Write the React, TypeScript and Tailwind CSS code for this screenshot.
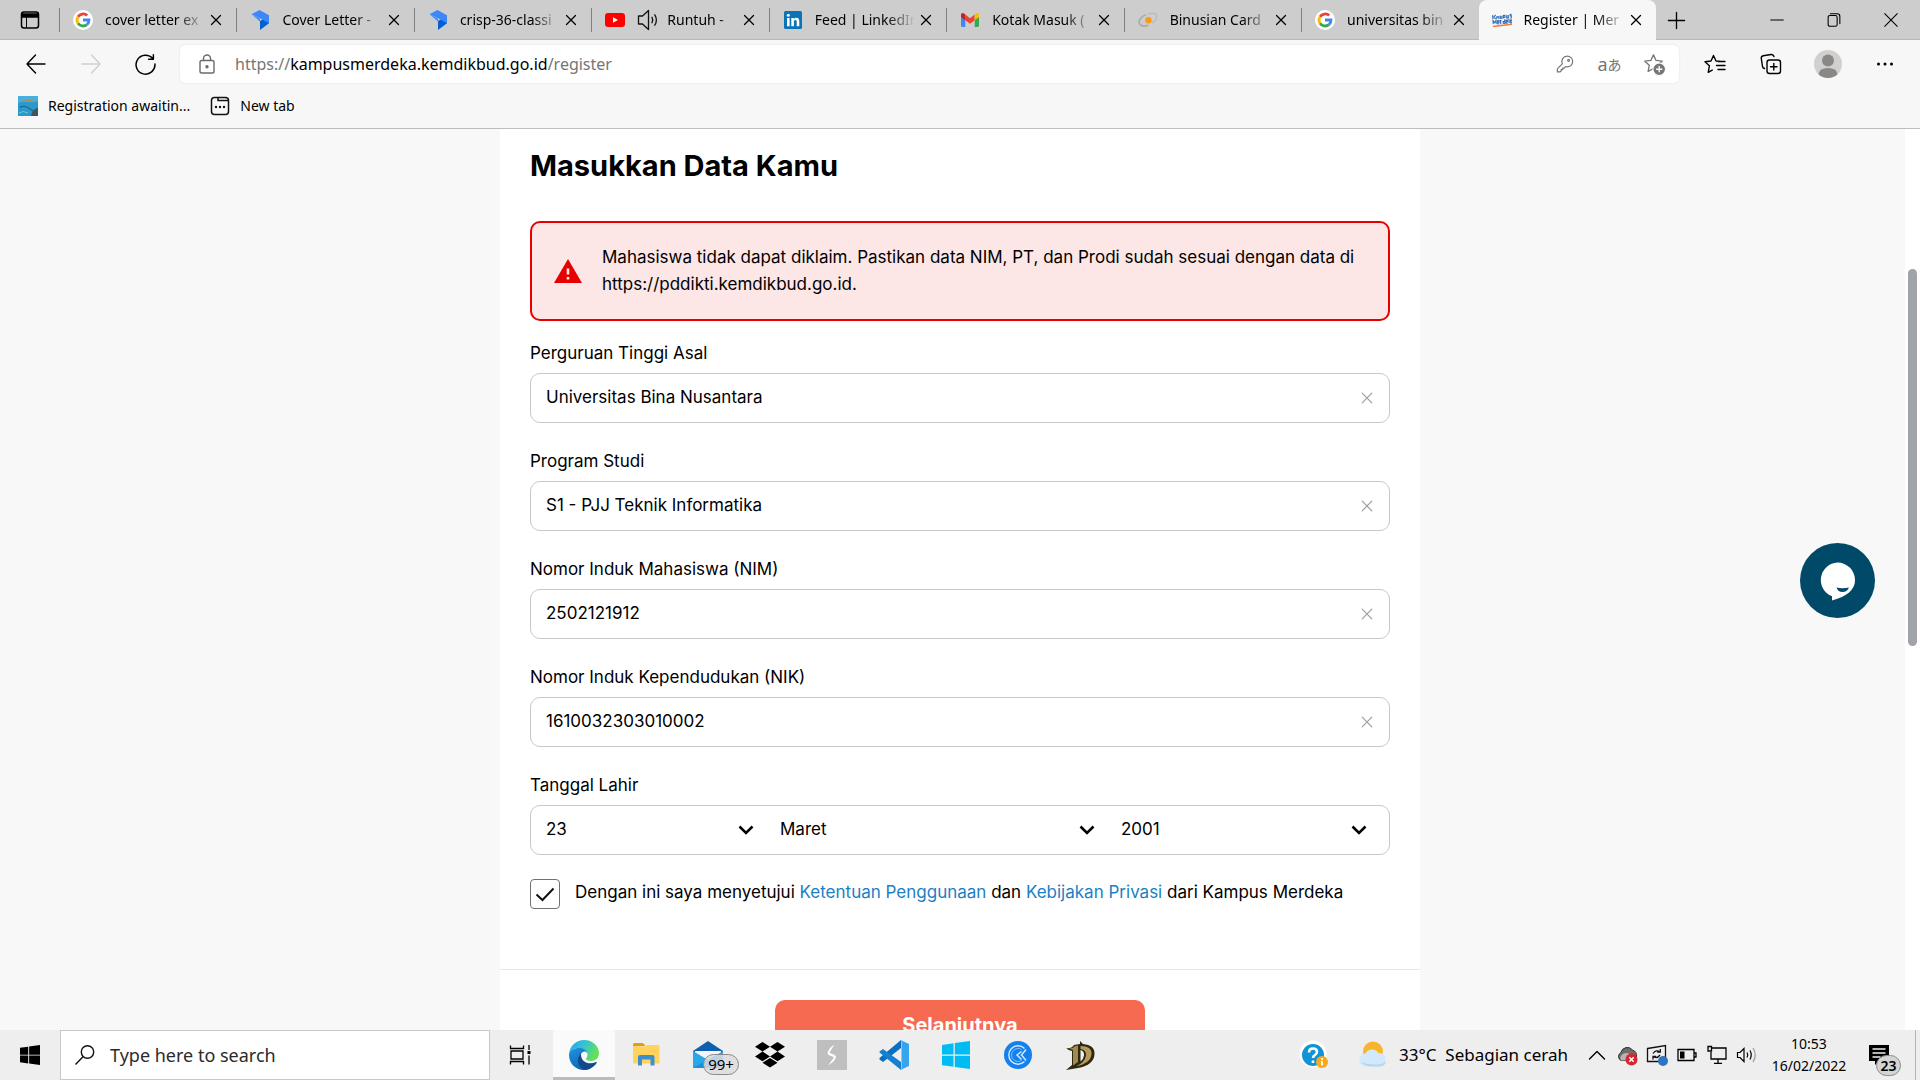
import type { ReactNode } from "react";

/* ---------- browser icons ---------- */

const GoogleIcon = () => (
  <svg viewBox="0 0 20 20" className="size-5 shrink-0">
    <circle cx="10" cy="10" r="10" fill="#fff" />
    <g fill="none" strokeWidth="2.8">
      <path d="M5 6.8A6 6 0 0 1 14.2 5.6" stroke="#ea4335" />
      <path d="M5 6.8a6 6 0 0 0 0 6.5" stroke="#fbbc05" />
      <path d="M5 13.2a6 6 0 0 0 8.9 1.4" stroke="#34a853" />
      <path d="M10 10h6a6 6 0 0 1-2 4.6" stroke="#4285f4" />
    </g>
  </svg>
);

const LetterIcon = () => (
  <svg viewBox="0 0 20 20" className="size-5 shrink-0">
    <path d="M10 11l9-5.500v7.800L10 20z" fill="#0061d0" />
    <path d="M1.500 4.200L9.500 0 19 5.300v8L10.500 8.500z" fill="#3b87fb" />
    <path d="M1.500 4.200l8.500 4.600v2.700z" fill="#3b87fb" />
  </svg>
);

const YoutubeIcon = () => (
  <svg viewBox="0 0 20 20" className="size-5 shrink-0">
    <rect y="3" width="20" height="14" rx="3" fill="#f00" />
    <path d="M8 7.200l5 2.800-5 2.800z" fill="#fff" />
  </svg>
);

const TabSpeakerIcon = () => (
  <svg viewBox="0 0 22 22" className="-mr-1 size-[22px] shrink-0" fill="none" stroke="#111" strokeWidth="1.300" strokeLinejoin="round" strokeLinecap="round">
    <path d="M1.500 7h4l6-5.500v19L5.500 15h-4zM15 8.300q1.600 2.700 0 5.400M17.800 5.800q3.200 5.200 0 10.400" />
  </svg>
);

const LinkedinIcon = () => (
  <svg viewBox="0 0 20 20" className="size-5 shrink-0">
    <rect x="1" y="1" width="18" height="18" rx="1.500" fill="#0a74b6" />
    <g fill="#fff">
      <circle cx="5.300" cy="5.300" r="1.500" />
      <path d="M4 8h2.600v8.200H4zM8.300 8h2.500v1.200c.5-.8 1.300-1.400 2.500-1.400 2.400 0 3 1.600 3 3.700v4.700h-2.600V12c0-1.100-.2-2-1.300-2-1.200 0-1.500.9-1.500 2v4.200H8.300z" />
    </g>
  </svg>
);

const GmailIcon = () => (
  <svg viewBox="0 0 20 20" className="size-5 shrink-0">
    <path d="M1 5v10.500q0 1.500 1.500 1.500H5.300V8z" fill="#4285f4" />
    <path d="M19 5v10.500q0 1.500-1.500 1.500h-2.800V8z" fill="#34a853" />
    <path d="M5.300 4.500L10 8.200l4.700-3.700v5.700L10 13.700l-4.700-3.500z" fill="#ea4335" />
    <path d="M1 5q0-2 1.800-2Q4 3 5.300 4.500v5.700L1 7z" fill="#c5221f" />
    <path d="M19 5q0-2-1.800-2-1.200 0-2.500 1.500v5.700L19 7z" fill="#fbbc04" />
  </svg>
);

const BinusIcon = () => (
  <svg viewBox="0 0 20 20" className="size-5 shrink-0" fill="none">
    <path d="M8 4.800C3 6.500 0 10.500 1.500 13.700c1.200 2.400 5 2.900 9 1.600" stroke="#aaa" strokeWidth="1.600" />
    <path d="M9 4.500c4-1.500 8.500-1.600 9.500 0 1 2-.6 6.200-4.600 8.800" stroke="#b9b9b9" strokeWidth="1.200" />
    <path d="M5 10c1-3 4-5 8-5.500" stroke="#ccc" strokeWidth="1.200" />
    <circle cx="10.500" cy="10.300" r="3.200" fill="#f99a1c" />
  </svg>
);

const KampusIcon = () => (
  <svg viewBox="0 0 20 20" className="size-5 shrink-0">
    <g transform="rotate(-4 10 10)" fill="none" stroke="#2f6cb8" strokeWidth="1.100">
      <path d="M1 4.500v4M2 6.500l2-2M2 6.500l2 2M5 8.500v-2h2v2M8.500 9V5.500M10 9V6M11.500 8.500v-3h1.700v2h-1.500M15 5.500v3h1.500v-3M18 8.500h2v-2h-1.500v-1.500h1.500" />
      <path d="M1 13.500v-3.500l1.500 2L4 10v3.500M5.500 12h1.500v-1.500H5.500v3h1.500M8.500 14v-3.500h1M11 13.500h1.700V9.500M11 13.500v-2h1.500M14 12h1.500v-1.500H14v3h1.500M17 9.500v4M18.500 13.500h1.500v-3h-1.500z" />
    </g>
    <path d="M1 16.500q9-1 19-2.200" stroke="#ee7d3b" strokeWidth="1.500" fill="none" />
  </svg>
);

const Line = ({ d, className, w = 1.4 }: { d: string; className: string; w?: number }) => (
  <svg viewBox="0 0 20 20" className={className} fill="none" stroke="currentColor" strokeWidth={w} strokeLinecap="round" strokeLinejoin="round">
    <path d={d} />
  </svg>
);

const STAR = "M10 1.800l2.500 5.300 5.800.7-4.300 4 1.100 5.800L10 14.800l-5.100 2.800L6 11.800 1.700 7.800l5.800-.7z";

/* ---------- tab strip ---------- */

type Tab = { title: string; icon: ReactNode; audio?: boolean; active?: boolean };

const tabs: Tab[] = [
  { title: "cover letter ex", icon: <GoogleIcon /> },
  { title: "Cover Letter -", icon: <LetterIcon /> },
  { title: "crisp-36-classi", icon: <LetterIcon /> },
  { title: "Runtuh -", icon: <YoutubeIcon />, audio: true },
  { title: "Feed | LinkedIn", icon: <LinkedinIcon /> },
  { title: "Kotak Masuk (", icon: <GmailIcon /> },
  { title: "Binusian Card", icon: <BinusIcon /> },
  { title: "universitas bin", icon: <GoogleIcon /> },
  { title: "Register | Mer", icon: <KampusIcon />, active: true },
];

function TabItem({ tab }: { tab: Tab }) {
  return (
    <div
      className={
        tab.active
          ? "flex h-10 min-w-0 flex-1 items-center rounded-t-lg bg-[#f7f7f7]"
          : "flex h-10 min-w-0 flex-1 items-center"
      }
    >
      <span className={tab.active ? "h-6" : "h-6 w-px bg-[#808080]"} />
      <button type="button" className="ml-[13px] flex h-full min-w-0 flex-1 items-center gap-3 text-left">
        {tab.icon}
        {tab.audio && <TabSpeakerIcon />}
        <span className="flex-1 overflow-hidden whitespace-nowrap text-sm text-black [mask-image:linear-gradient(to_right,black_72%,transparent_100%)]">
          {tab.title}
        </span>
      </button>
      <button type="button" aria-label={`Close ${tab.title}`} className="mr-[9px] flex w-[22px] items-center justify-center text-black">
        <Line d="M5 5l10 10M15 5L5 15" className="size-[18px]" />
      </button>
    </div>
  );
}

function TabStrip() {
  return (
    <div className="flex h-10 items-center bg-[#cdcdcd] shadow-[inset_0_-1px_0_#b8b8b8]">
      <button type="button" aria-label="Tab actions" className="flex h-10 w-[59px] shrink-0 items-center justify-center text-black">
        <svg viewBox="0 0 20 20" className="size-5" fill="none" stroke="currentColor" strokeWidth="1.500">
          <rect x="1.500" y="2" width="17" height="16" rx="2.500" />
          <path d="M2 4h16v3H2z" fill="currentColor" />
          <path d="M6.500 7v11" strokeWidth="1" />
        </svg>
      </button>
      <div className="flex max-w-[1597px] flex-1">
        {tabs.map((t) => (
          <TabItem key={t.title} tab={t} />
        ))}
      </div>
      <button type="button" aria-label="New tab" className="flex h-10 w-10 items-center justify-center text-black">
        <Line d="M10 1.500v17M1.500 10h17" className="size-[19px]" />
      </button>
      <div className="ml-auto flex h-10">
        <button type="button" aria-label="Minimize" className="flex w-[57px] items-center justify-center">
          <Line d="M3 10h14" className="size-[18px]" w={1.2} />
        </button>
        <button type="button" aria-label="Restore" className="flex w-[57px] items-center justify-center">
          <Line d="M3.500 7q0-2 2-2h6q2 0 2 2v8q0 2-2 2h-6q-2 0-2-2zM6 3h7.500q3 0 3 3v8" className="size-[18px]" w={1.2} />
        </button>
        <button type="button" aria-label="Close window" className="flex w-[58px] items-center justify-center">
          <Line d="M3 3l14 14M17 3L3 17" className="size-[18px]" w={1.2} />
        </button>
      </div>
    </div>
  );
}

/* ---------- toolbar ---------- */

function Toolbar() {
  return (
    <div className="flex h-12 items-center pr-2">
      <nav className="flex w-[180px] shrink-0 items-center pl-2 text-black">
        <button type="button" aria-label="Back" className="flex w-[55px] justify-center">
          <Line d="M19 10H1M9.500 1L1 10l8.500 9" className="size-5" />
        </button>
        <button type="button" aria-label="Forward" className="flex w-[55px] justify-center text-[#cfcfcf]">
          <Line d="M1 10h18M10.500 1L19 10l-8.500 9" className="size-5" />
        </button>
        <button type="button" aria-label="Refresh" className="flex w-[55px] justify-center">
          <Line d="M17 4.500A9 9 0 1 0 19 9.500M17.500 .800v4.200h-4.500" className="size-[21px]" />
        </button>
      </nav>
      <div className="flex h-[38px] min-w-0 flex-1 items-center rounded-md bg-white pl-[17px] pr-0.5 shadow-[0_0_3px_rgba(0,0,0,0.08)]">
        <button type="button" aria-label="View site information" className="mr-[18px] text-[#6b6b6b]">
          <svg viewBox="0 0 20 20" className="size-5" fill="none" stroke="currentColor" strokeWidth="1.400">
            <rect x="3" y="6.500" width="14" height="12.500" rx="1.800" />
            <path d="M6.500 6.500V4.500a3.500 3.500 0 0 1 7 0v2" />
            <circle cx="10" cy="12.800" r="1" fill="currentColor" />
          </svg>
        </button>
        <div className="min-w-0 flex-1 whitespace-nowrap text-base text-[#767676]">
          https://<span className="text-black">kampusmerdeka.kemdikbud.go.id</span>/register
        </div>
        <div className="flex items-center text-[#767676]">
          <button type="button" aria-label="Saved passwords" className="flex w-[45px] justify-center">
            <svg viewBox="0 0 20 20" className="size-[18px]" fill="none" stroke="currentColor" strokeWidth="1.300" strokeLinejoin="round">
              <path d="M12.500 1.200a6 6 0 0 1 0 12q-1.200 0-2-.4l-1.300 1.700H7.500v1.700H5.700v1.600l-1 1H1.500v-3.300L7 9.800A6 6 0 0 1 12.500 1.200z" />
              <circle cx="14" cy="6" r="1" />
            </svg>
          </button>
          <button type="button" aria-label="Translate" className="flex w-[45px] items-center justify-center">
            <span className="text-lg leading-5">a</span>
            <span className="font-['Noto_Sans_CJK_JP',sans-serif] text-sm leading-5">あ</span>
          </button>
          <button type="button" aria-label="Add to favorites" className="flex w-[45px] justify-center">
            <svg viewBox="0 0 22 22" className="size-[23px]" fill="none" stroke="currentColor" strokeWidth="1.300" strokeLinejoin="round">
              <path d={STAR} />
              <circle cx="15.500" cy="15.500" r="6" fill="currentColor" stroke="#fff" strokeWidth="1" />
              <path d="M15.500 12.500v6M12.500 15.500h6" stroke="#fff" />
            </svg>
          </button>
        </div>
      </div>
      <div className="flex items-center pl-2 text-black">
        <button type="button" aria-label="Favorites" className="flex w-14 justify-center">
          <svg viewBox="0 0 22 20" className="h-5 w-[22px]" fill="none" stroke="currentColor" strokeWidth="1.400" strokeLinejoin="round" strokeLinecap="round">
            <path d="M15.500 7.300L12 7l-2.500-5.500L7 7l-6 .8 4.400 4-1.200 6.500 4-2.200M14 7.500h7M12.500 11.500H21M14 15.500h7" />
          </svg>
        </button>
        <button type="button" aria-label="Collections" className="flex w-14 justify-center">
          <svg viewBox="0 0 22 22" className="size-[22px]" fill="none" stroke="currentColor" strokeWidth="1.400" strokeLinecap="round">
            <rect x="7" y="7" width="13.500" height="13.500" rx="2.500" />
            <path d="M13.800 10.500v6.500M10.500 13.800h6.500M4.500 15.500q-1.700-.4-2-2L1.300 5.500Q1 3.300 3.200 2.800L11 1.500q2.300-.3 3 2" />
          </svg>
        </button>
        <button type="button" aria-label="Profile" className="flex w-[58px] justify-center">
          <svg viewBox="0 0 28 28" className="size-7">
            <circle cx="14" cy="14" r="14" fill="#d2d0ce" />
            <circle cx="14" cy="10.500" r="6" fill="#8a8886" />
            <path d="M4.500 24.200Q5.500 18 14 18t9.500 6.200A14 14 0 0 1 4.500 24.200z" fill="#8a8886" />
          </svg>
        </button>
        <button type="button" aria-label="Settings and more" className="flex w-[55px] justify-center">
          <svg viewBox="0 0 20 20" className="size-5" fill="currentColor">
            <circle cx="3.500" cy="10" r="1.500" />
            <circle cx="10" cy="10" r="1.500" />
            <circle cx="16.500" cy="10" r="1.500" />
          </svg>
        </button>
      </div>
    </div>
  );
}

function Bookmarks() {
  return (
    <div className="flex h-10 items-center gap-5 pb-1 pl-[18px] text-sm text-black">
      <a href="#registration" className="flex items-center gap-[10px]">
        <svg viewBox="0 0 20 20" className="size-5">
          <rect width="20" height="20" fill="#2b9acb" />
          <path d="M0 0h20v5q-5 2-10 1T0 7z" fill="#48b0dc" />
          <path d="M5 5.500q5-1.500 10-.5" stroke="#a98a6a" strokeWidth="1.500" fill="none" />
          <path d="M2 11q6-2 10 2t8-1" stroke="#146c98" strokeWidth="1.400" fill="none" />
          <path d="M13 20q1-7 7-8v8z" fill="#43545c" />
          <path d="M1 17q4-3 9 0" stroke="#6cc4e4" fill="none" />
        </svg>
        Registration awaitin...
      </a>
      <a href="#newtab" className="flex items-center gap-[10px]">
        <svg viewBox="0 0 20 20" className="size-5" fill="none" stroke="#111" strokeWidth="1.500">
          <rect x="1.500" y="1.500" width="17" height="17" rx="3" />
          <path d="M8 1.500v3h10.500" />
          <g fill="#111" stroke="none">
            <circle cx="6" cy="11" r="1.200" />
            <circle cx="10" cy="11" r="1.200" />
            <circle cx="14" cy="11" r="1.200" />
          </g>
        </svg>
        New tab
      </a>
    </div>
  );
}

/* ---------- registration form ---------- */

const fields = [
  { id: "pt", label: "Perguruan Tinggi Asal", value: "Universitas Bina Nusantara" },
  { id: "prodi", label: "Program Studi", value: "S1 - PJJ Teknik Informatika" },
  { id: "nim", label: "Nomor Induk Mahasiswa (NIM)", value: "2502121912" },
  { id: "nik", label: "Nomor Induk Kependudukan (NIK)", value: "1610032303010002" },
];

function Field({ id, label, value }: { id: string; label: string; value: string }) {
  return (
    <div className="flex flex-col gap-[6px]">
      <label htmlFor={id} className="leading-[27px]">{label}</label>
      <div className="flex h-[50px] items-center rounded-[10px] border border-[#c6c8cc] pl-[15px] pr-4">
        <input id={id} type="text" defaultValue={value} className="min-w-0 flex-1 bg-transparent outline-none" />
        <button type="button" aria-label={`Hapus ${label}`} className="text-[#9a9da1]">
          <Line d="M2 2l16 16M18 2L2 18" className="size-3" w={2} />
        </button>
      </div>
    </div>
  );
}

function DateSelect({ label, value, last }: { label: string; value: string; last?: boolean }) {
  return (
    <div className="relative flex h-full items-center">
      <select aria-label={label} defaultValue={value} className="size-full appearance-none bg-transparent pl-[15px] outline-none">
        <option>{value}</option>
      </select>
      <svg
        viewBox="0 0 16 16"
        className={last ? "pointer-events-none absolute right-[22px] size-4" : "pointer-events-none absolute right-[11px] size-4"}
        fill="none"
        stroke="#000"
        strokeWidth="2.500"
      >
        <path d="M1.500 4.500L8 11l6.500-6.500" />
      </svg>
    </div>
  );
}

function RegisterForm() {
  return (
    <form className="mx-auto w-full max-w-[920px] bg-white pb-10 font-['Inter',sans-serif] text-[17px] text-black">
      <div className="px-[30px] pt-5">
        <h1 className="text-[29px] font-bold leading-[34px]">Masukkan Data Kamu</h1>
        <div role="alert" className="mt-[38px] flex items-center rounded-[10px] border-2 border-[#e60000] bg-[#fce6e6] py-[21px] pl-[22px] pr-4">
          <svg viewBox="0 0 28 24" className="mr-5 h-6 w-7 shrink-0">
            <path d="M14 0l14 24H0z" fill="#e60000" />
            <path d="M12.700 9.500h2.600v6h-2.600zM12.700 18h2.600v2.600h-2.600z" fill="#fce6e6" />
          </svg>
          <p className="leading-[27px]">
            Mahasiswa tidak dapat diklaim. Pastikan data NIM, PT, dan Prodi sudah sesuai dengan data di
            https://pddikti.kemdikbud.go.id.
          </p>
        </div>
        <div className="mt-[19px] flex flex-col gap-[25px]">
          {fields.map((f) => (
            <Field key={f.id} {...f} />
          ))}
          <fieldset>
            <legend className="leading-[27px]">Tanggal Lahir</legend>
            <div className="mt-[6px] grid h-[50px] grid-cols-[234fr_341fr_283fr] rounded-[10px] border border-[#c6c8cc]">
              <DateSelect label="Tanggal" value="23" />
              <DateSelect label="Bulan" value="Maret" />
              <DateSelect label="Tahun" value="2001" last />
            </div>
          </fieldset>
        </div>
        <div className="mt-6 flex gap-[15px]">
          <div className="relative size-[30px] shrink-0">
            <input id="agree" type="checkbox" defaultChecked className="size-full appearance-none rounded border border-[#6f7378] bg-white" />
            <svg viewBox="0 0 30 30" className="pointer-events-none absolute inset-0" fill="none" stroke="#111" strokeWidth="2">
              <path d="M6.500 15.500l6 5.500L23.500 9.500" />
            </svg>
          </div>
          <p className="leading-[27px]">
            <label htmlFor="agree">Dengan ini saya menyetujui</label>{" "}
            <a href="#ketentuan" className="text-[#1b7fc4]">Ketentuan Penggunaan</a> dan{" "}
            <a href="#privasi" className="text-[#1b7fc4]">Kebijakan Privasi</a> dari Kampus Merdeka
          </p>
        </div>
      </div>
      <div className="mt-[60px] flex justify-center border-t border-[#e6e7e9] pt-[30px]">
        <button type="button" className="h-[50px] w-full max-w-[370px] rounded-[10px] bg-[#f66a51] text-xl font-bold text-white">
          Selanjutnya
        </button>
      </div>
    </form>
  );
}

/* ---------- taskbar ---------- */

const EdgeIcon = () => (
  <svg viewBox="0 0 30 30" className="size-[30px]">
    <defs>
      <linearGradient id="edgeTop" x1="0" y1="0" x2="1" y2="0.400">
        <stop offset="0" stopColor="#22a4e8" />
        <stop offset="0.500" stopColor="#33c3d6" />
        <stop offset="1" stopColor="#66e05a" />
      </linearGradient>
      <linearGradient id="edgeLeft" x1="0" y1="0" x2="0.600" y2="1">
        <stop offset="0" stopColor="#1e95e0" />
        <stop offset="1" stopColor="#0f62b4" />
      </linearGradient>
    </defs>
    <path d="M0 14C1 5 8 0 15 0c9 0 15 6.500 15 13 0 5-3.500 8-8 8-3.500 0-5-1.300-5-2.300 0-.8 1.500-1.500 1.500-4C18.500 11 15 8 10.500 8 5 8 1 11 0 14z" fill="url(#edgeTop)" />
    <path d="M0 14c1-3.500 5-6 10.500-6 4 0 7 2 7.800 5C17 11.500 15 11 14 12c-4 2.500-4 9 .5 13 3 2.700 6 3 8 2.500C20 29.500 17.500 30 15 30 6 30 0 23 0 15z" fill="url(#edgeLeft)" />
    <path d="M12 13.500C7 18 8 26 15 30c5 0 10-2.500 12.700-7.200.3-.6-.2-1-.8-.7C21 25 11.500 23 12 13.500z" fill="#114a8b" />
  </svg>
);

const ExplorerIcon = () => (
  <svg viewBox="0 0 28 26" className="h-[26px] w-7">
    <path d="M1 4.500V2.500Q1 1 2.500 1H11l2.500 3z" fill="#e0a00a" />
    <path d="M1 4.500h12L15 3h11q1.500 0 1.500 1.500v17H1z" fill="#ffd35c" />
    <path d="M6 23.500V15q0-2 2-2h12.500q2 0 2 2v8.500h-4v-6h-8.500v6z" fill="#3e8fcf" />
  </svg>
);

const MailIcon = () => (
  <span className="relative flex">
    <svg viewBox="0 0 30 30" className="size-[30px]">
      <path d="M0 11L15 1l15 10v4H0z" fill="#0f5fae" />
      <path d="M2 11h26v9H2z" fill="#f3f5f8" />
      <path d="M0 11l15 9 15-9v17H0z" fill="#28a8e8" />
      <path d="M0 28L22 15.800 30 28z" fill="#1b8fdc" />
    </svg>
    <span className="absolute -right-4 top-3.5 flex h-[21px] w-9 items-center justify-center rounded-full border border-[#8a8a8a] bg-[#dcdcdc]/85 text-[15px] text-black">
      99+
    </span>
  </span>
);

const DropboxIcon = () => (
  <svg viewBox="0 0 30 26" className="h-[26px] w-[30px]">
    <path d="M7.500 0L15 4.800 7.500 9.600 0 4.800zM22.500 0L30 4.800l-7.500 4.800L15 4.800zM0 14.400l7.500-4.800L15 14.400l-7.500 4.800zM22.500 9.600l7.500 4.800-7.500 4.800-7.500-4.800zM7.500 20.800L15 16l7.500 4.800L15 25.600z" />
  </svg>
);

const SparkIcon = () => (
  <svg viewBox="0 0 30 30" className="size-[30px]">
    <path d="M0 0h30v30H0z" fill="#bfbfbf" />
    <path d="M17.500 4.500q-6 4-7 8.500 0 2 5 3.500l1.500 1-6 8q7-4 8-8.500 0-2-5-3.500l-1.500-1z" fill="#fff" />
  </svg>
);

const CodeIcon = () => (
  <svg viewBox="0 0 30 30" className="size-[30px]">
    <path d="M22 0v8L4 22 .500 19.500v-1.500z" fill="#0a6fc0" />
    <path d="M.500 11.500L4 9l18 13v8L.500 12.500z" fill="#1381cf" />
    <path d="M21.500 0L30 4v22l-8.500 4q1-1 1-2.500v-25Q22.500 1 21.500 0z" fill="#36a5ee" />
  </svg>
);

const WindowsIcon = ({ className }: { className: string }) => (
  <svg viewBox="0 0 28 28" className={className} fill="currentColor">
    <path d="M0 4l11.500-1.700v11.200H0zM12.800 2L28 0v13.500H12.800zM0 14.700h11.500v11.100L0 24.200zM12.800 14.700H28V28l-15.200-2.100z" />
  </svg>
);

const ClockAppIcon = () => (
  <svg viewBox="0 0 28 28" className="size-7" fill="none">
    <circle cx="14" cy="14" r="14" fill="#1380ee" />
    <path d="M20.500 7.500A9.200 9.200 0 1 0 20.500 20.500" stroke="#d8ebff" strokeWidth="1.400" />
    <path d="M17.500 10.500L13 14l4.500 4.500M22 8.500L17.500 14l4.500 5.500" stroke="#d8ebff" strokeWidth="1.400" />
    <path d="M17.500 8.500A6.500 6.500 0 1 0 17.500 19.500" stroke="#7fbcf8" strokeWidth="1" />
  </svg>
);

const EmblemIcon = () => (
  <svg viewBox="0 0 30 30" className="size-[30px]">
    <path d="M1 8q5 1 8-3l6-1V1l3 3q12 1 11.500 10Q29 25 13 28l-12 2 6-5V11q-3 0-6-3z" fill="#2f2712" />
    <path d="M3.500 8.500q4 .5 6.500-2.500l3-.5V22L8 25.500V10z" fill="#a08a4c" />
    <path d="M15.500 6Q27 6 26.500 14 26 23 11 26.500q9-4.500 10-11Q21.500 10 15.500 9z" fill="#b39c5b" />
    <path d="M15.500 10q4 1 3.500 5.500-.5 4-3.500 6z" fill="#eee" />
  </svg>
);

const apps: { name: string; icon: ReactNode; active?: boolean }[] = [
  { name: "Microsoft Edge", icon: <EdgeIcon />, active: true },
  { name: "File Explorer", icon: <ExplorerIcon /> },
  { name: "Mail", icon: <MailIcon /> },
  { name: "Dropbox", icon: <DropboxIcon /> },
  { name: "Spark", icon: <SparkIcon /> },
  { name: "Visual Studio Code", icon: <CodeIcon /> },
  { name: "Windows", icon: <WindowsIcon className="size-7 text-[#00bcf2]" /> },
  { name: "Clock", icon: <ClockAppIcon /> },
  { name: "Emblem", icon: <EmblemIcon /> },
];

function TrayIcons() {
  const box = "flex w-[30px] shrink-0 items-center justify-center";
  return (
    <div className="flex h-full items-center text-black">
      <button type="button" aria-label="Show hidden icons" className={box}>
        <Line d="M2.500 14L10 6.500l7.500 7.500" className="size-5" />
      </button>
      <button type="button" aria-label="OneDrive" className={box}>
        <svg viewBox="0 0 22 22" className="size-[22px]">
          <path d="M5 16.500a4.500 4.500 0 0 1 0-8A6.500 6.500 0 0 1 16.500 6Q21 7.500 20.500 13q-1 3.500-4 3.500z" fill="#6d6d6d" stroke="#2a2a2a" />
          <path d="M5 16.500q-2-4 2-6.500t8 1l4 5.500z" fill="#b5b5b5" />
          <circle cx="15.500" cy="15.500" r="6" fill="#dc2430" />
          <path d="M13.300 13.300l4.400 4.400M17.700 13.300l-4.400 4.400" stroke="#fff" strokeWidth="1.500" />
        </svg>
      </button>
      <button type="button" aria-label="Windows Update" className={box}>
        <svg viewBox="0 0 22 22" className="size-[22px]" fill="none" stroke="#111" strokeWidth="1.300">
          <path d="M1.500 4.500L19.500 1.500v16l-18 0z" />
          <path d="M7 9.500q3-4.500 7-1.500M14.300 5v3.200h-3.200M14 11q-3 4-6.700 1.500M7 15.500v-3.200h3" />
          <circle cx="17" cy="17" r="5" fill="#2f74c0" stroke="none" />
        </svg>
      </button>
      <button type="button" aria-label="Battery" className={box}>
        <svg viewBox="0 0 20 20" className="size-5" fill="none" stroke="#000" strokeWidth="1.300">
          <path d="M1 4.500h16v11H1zM17 8h2v4h-2" />
          <path d="M3 6.500h4.500v7H3z" fill="#000" stroke="none" />
        </svg>
      </button>
      <button type="button" aria-label="Network" className={box}>
        <svg viewBox="0 0 20 20" className="size-5" fill="none" stroke="#000" strokeWidth="1.300">
          <path d="M5 3h14v11H4V7M11 14v4M7 18.300h8M1 1.500h3.500v4.500H1z" />
        </svg>
      </button>
      <button type="button" aria-label="Volume" className={box}>
        <svg viewBox="0 0 22 20" className="h-5 w-[22px]" fill="none" stroke="#000" strokeWidth="1.200">
          <path d="M1.500 7.500H4L8 3.500v13L4 12.500H1.500zM11 7.500q1.500 2.500 0 5M14 5.500q2.500 4.500 0 9" />
          <path d="M17 3q4.500 7 0 14" stroke="#999" />
        </svg>
      </button>
    </div>
  );
}

function Taskbar() {
  return (
    <footer className="flex h-[50px] shrink-0 items-center bg-[#eee] text-black">
      <button type="button" aria-label="Start" className="flex w-[60px] shrink-0 justify-center">
        <WindowsIcon className="size-5" />
      </button>
      <div className="flex h-full w-full max-w-[430px] items-center border border-[#c8c8c8] bg-white pl-3.5">
        <svg viewBox="0 0 20 20" className="mr-[15px] size-5 shrink-0" fill="none" stroke="#111" strokeWidth="1.400">
          <circle cx="12.500" cy="7" r="6.200" />
          <path d="M8.200 11.500L.500 19.500" />
        </svg>
        <input
          type="text"
          aria-label="Type here to search"
          placeholder="Type here to search"
          className="min-w-0 flex-1 bg-transparent text-lg outline-none placeholder:text-[#2b2b2b]"
        />
      </div>
      <button type="button" aria-label="Task View" className="flex w-[63px] shrink-0 justify-center pr-1">
        <svg viewBox="0 0 22 20" className="h-5 w-[22px]" fill="none" stroke="#000" strokeWidth="1.300">
          <path d="M2 6h12v8H2zM1.500.500v3h13v-3M1.500 19.500v-3h13v3M20 0v5M20 10.500v9" />
          <path d="M18.500 6h3v3h-3z" fill="#000" stroke="none" />
        </svg>
      </button>
      <div className="flex h-full">
        {apps.map((a) => (
          <button
            key={a.name}
            type="button"
            aria-label={a.name}
            className={
              a.active
                ? "flex w-[62px] items-center justify-center bg-[#fafafa] shadow-[inset_0_-3px_0_#bcbcbc]"
                : "flex w-[62px] items-center justify-center"
            }
          >
            {a.icon}
          </button>
        ))}
      </div>
      <div className="ml-auto flex h-full items-center">
        <button type="button" aria-label="Help" className="mr-[30px]">
          <svg viewBox="0 0 30 30" className="size-[30px]">
            <circle cx="14" cy="14" r="13.500" fill="#fff" />
            <circle cx="14" cy="15" r="11" fill="#0f95d4" />
            <path d="M10 12.500q0-4 4-4t4 3.300q0 2-2 3.200t-2 3M14 20.500v2.500" stroke="#fff" strokeWidth="2.600" fill="none" />
            <circle cx="23" cy="22" r="6" fill="#f6a91c" />
            <path d="M23 18v2M23 21v4.500" stroke="#fff" strokeWidth="1.800" />
          </svg>
        </button>
        <button type="button" className="mr-[14px] flex items-center whitespace-nowrap text-[17px]">
          <svg viewBox="0 0 28 28" className="mr-3 size-7">
            <circle cx="14" cy="10.500" r="10" fill="#f9b42d" />
            <path d="M7 25.500a6.500 6.500 0 0 1-.5-13A7.500 7.500 0 0 1 19.500 12a6.800 6.800 0 0 1 1.500 13.500z" fill="#d3e9fb" />
            <path d="M2 21q4 4.500 10 4.500h9q5-.5 6-5-4 3-9 3-8 .5-16-2.500z" fill="#b4d7f4" />
          </svg>
          33°C&nbsp; Sebagian cerah
        </button>
        <TrayIcons />
        <div className="ml-[9px] w-[76px] whitespace-nowrap text-center text-sm leading-[22px]">
          <div>10:53</div>
          <div>16/02/2022</div>
        </div>
        <button type="button" aria-label="Notifications" className="relative ml-[22px] mr-[26px] flex">
          <svg viewBox="0 0 20 20" className="size-5">
            <path d="M0 0h20v16H10l-4 4v-4H0z" />
            <path d="M3.500 4h13M3.500 8h13M3.500 12h8" stroke="#eee" strokeWidth="1.400" />
          </svg>
          <span className="absolute -right-3 top-2.5 flex h-[21px] w-[25px] items-center justify-center rounded-full border border-[#8a8a8a] bg-[#d4d4d4] text-sm font-semibold">
            23
          </span>
        </button>
        <span className="mr-1 h-full w-px bg-[#b5b5b5]" />
      </div>
    </footer>
  );
}

export default function App() {
  return (
    <div className="flex h-screen flex-col overflow-hidden bg-[#f8f8f8] font-['Noto_Sans','Noto_Sans_CJK_JP',sans-serif]">
      <header className="shrink-0 border-b border-[#bdbdbd] bg-[#f7f7f7]">
        <TabStrip />
        <Toolbar />
        <Bookmarks />
      </header>
      <main className="relative min-h-0 flex-1 overflow-hidden">
        <RegisterForm />
        <button type="button" aria-label="Live chat" className="absolute right-[45px] top-[414px] size-[75px] rounded-full bg-[#004968]">
          <svg viewBox="0 0 75 75" className="size-full">
            <path d="M37.500 19.500a17.500 17.500 0 0 1 17.500 18c0 9-8 16-23 20V53.300A17.500 17.500 0 0 1 37.500 19.500z" fill="#fff" />
            <path d="M36.500 44.500q6 1.500 12.500 0-2 4.500-6.500 4.500t-6-4.500z" fill="#004968" />
          </svg>
        </button>
        <div className="absolute inset-y-0 right-0 w-[15px] bg-white">
          <div className="ml-[3px] mt-[140px] h-[377px] w-[9px] rounded-full bg-[#a0a3a8]" />
        </div>
      </main>
      <Taskbar />
    </div>
  );
}
